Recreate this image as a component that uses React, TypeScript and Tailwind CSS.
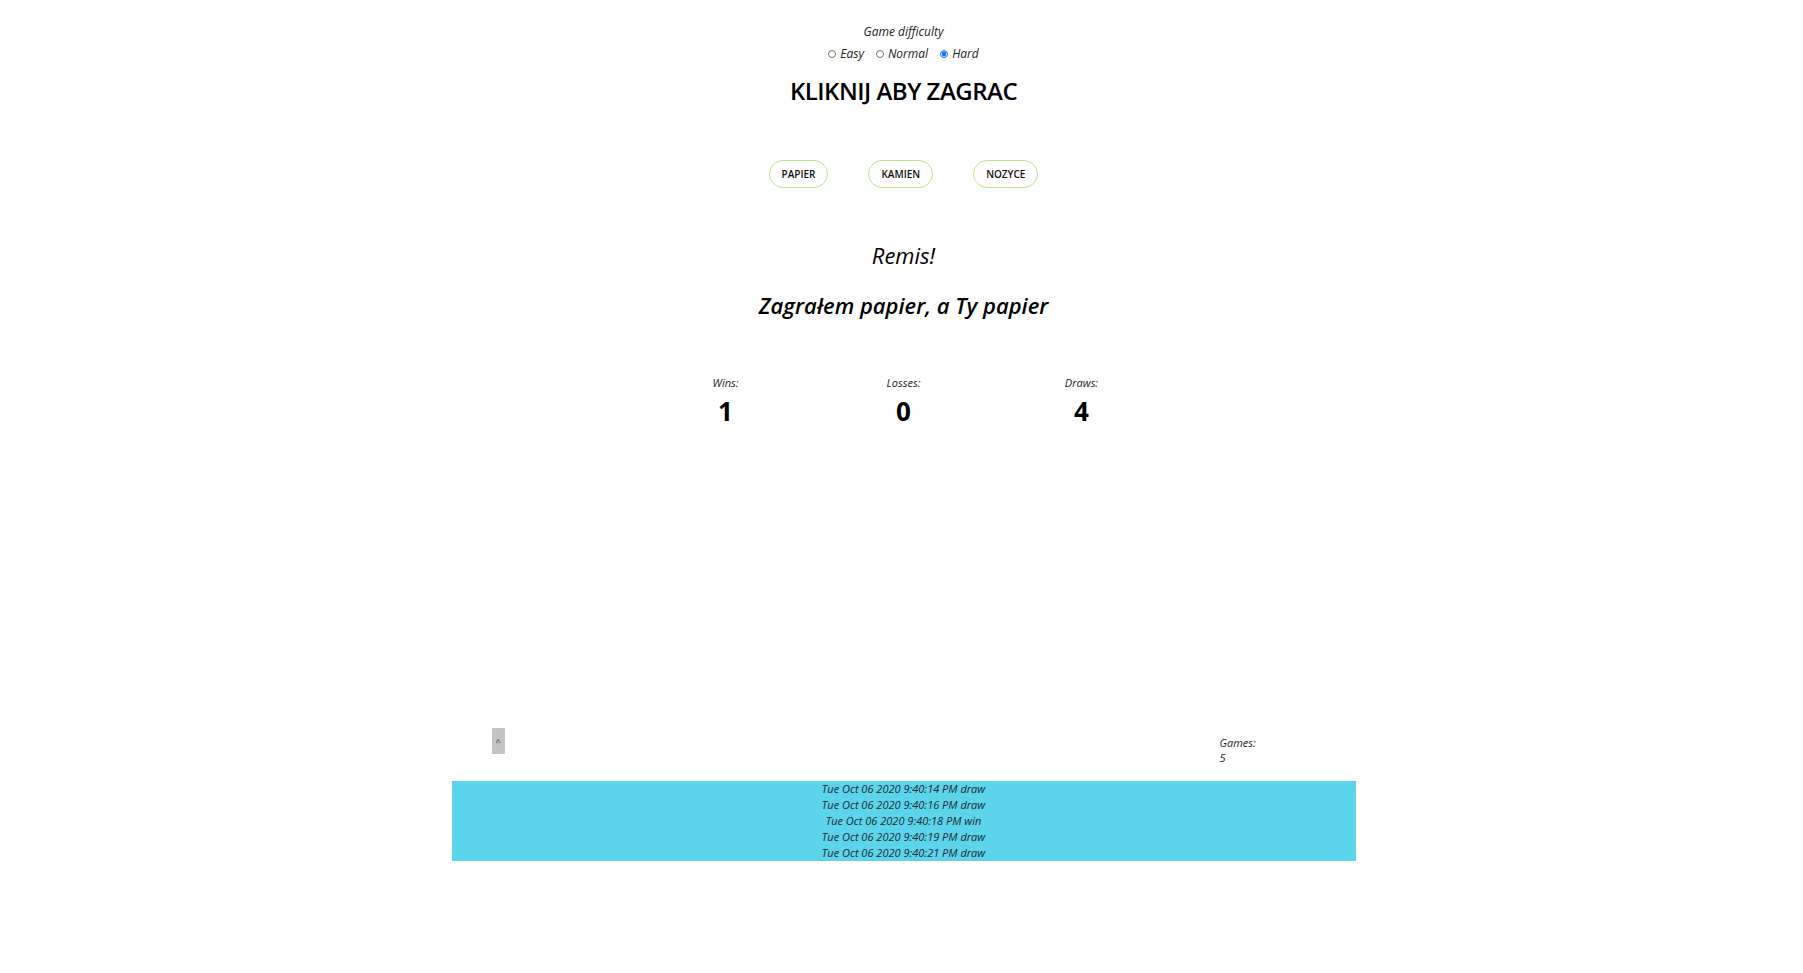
import React from "react";

const font = { fontFamily: '"Open Sans", "DejaVu Sans", sans-serif' };

export default function App() {
  const rows = [
    "Tue Oct 06 2020 9:40:14 PM draw",
    "Tue Oct 06 2020 9:40:16 PM draw",
    "Tue Oct 06 2020 9:40:18 PM win",
    "Tue Oct 06 2020 9:40:19 PM draw",
    "Tue Oct 06 2020 9:40:21 PM draw",
  ];
  return (
    <div className="w-full min-h-[973px] bg-white text-black italic font-['Open_Sans',sans-serif]" style={font}>
      <div className="flex flex-col items-center pl-[4px]">
        <div className="mt-[23px] text-[12px] leading-[18px] text-[#222]">Game difficulty</div>
        <div className="mt-[4px] flex items-center gap-[12px] text-[12px] leading-[18px] text-[#222]">
          <label className="flex items-center gap-[4px]">
            <input type="radio" name="d" className="w-[8px] h-[8px] m-0" /> Easy
          </label>
          <label className="flex items-center gap-[4px]">
            <input type="radio" name="d" className="w-[8px] h-[8px] m-0" /> Normal
          </label>
          <label className="flex items-center gap-[4px]">
            <input type="radio" name="d" defaultChecked className="w-[8px] h-[8px] m-0 accent-[#1a73e8]" /> Hard
          </label>
        </div>
        <div className="mt-[13px] text-[24px] leading-[30px] font-semibold tracking-[-0.5px] not-italic">KLIKNIJ ABY ZAGRAC</div>
        <div className="mt-[54px] flex gap-[40px]">
          {["PAPIER", "KAMIEN", "NOZYCE"].map((b) => (
            <button
              key={b}
              className="h-[28px] px-[12px] rounded-full border border-[#b8e68c] bg-white text-[10px] font-semibold not-italic text-[#111]"
            >
              {b}
            </button>
          ))}
        </div>
        <div className="mt-[52px] text-[22px] leading-[30px]">Remis!</div>
        <div className="mt-[20px] text-[22px] leading-[30px] font-semibold">Zagrałem papier, a Ty papier</div>
        <div className="mt-[55px] flex">
          {[
            ["Wins:", "1"],
            ["Losses:", "0"],
            ["Draws:", "4"],
          ].map(([l, v]) => (
            <div key={l} className="w-[178px] flex flex-col items-center">
              <div className="text-[11px] leading-[16px] text-[#222]">{l}</div>
              <div className="mt-[5px] text-[26px] leading-[30px] font-bold not-italic">{v}</div>
            </div>
          ))}
        </div>
        <div className="mt-[302px] w-[904px] flex justify-between pl-[40px] pr-[96px]">
          <button className="w-[13px] h-[26px] bg-[#c4c4c4] text-[9px] not-italic text-[#333] leading-none">^</button>
          <div className="pt-[7px] text-[11px] leading-[15px] text-[#222] w-[40px]">
            <div>Games:</div>
            <div>5</div>
          </div>
        </div>
        <div className="mt-[16px] w-[904px] bg-[#5cd4eb]">
          {rows.map((r) => (
            <div key={r} className="text-center text-[11px] leading-[16px] text-[#1a2a33]">
              {r}
            </div>
          ))}
        </div>
      </div>
    </div>
  );
}
